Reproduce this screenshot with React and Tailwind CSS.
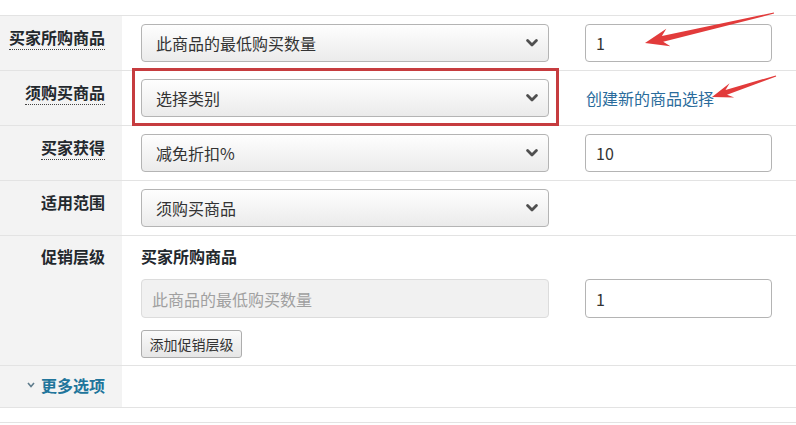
import React from "react";

function Chevron({ className = "" }) {
  return (
    <svg width="12" height="8" viewBox="0 0 12 8" className={className}>
      <path d="M1.6 1.6 L6 6 L10.4 1.6" fill="none" stroke="#505050" strokeWidth="2.8" strokeLinecap="round" strokeLinejoin="round" />
    </svg>
  );
}

function Select({ text }) {
  return (
    <div className="w-[408px] h-[38px] flex items-center justify-between pl-[14px] pr-[10px] border border-[#b4b4b4] rounded-[4px] bg-gradient-to-b from-[#fefefe] to-[#ebebeb] text-[16px] text-[#333]">
      <span>{text}</span>
      <Chevron />
    </div>
  );
}

function NumInput({ value }) {
  return (
    <div className="w-[187px] h-[38px] flex items-center pl-[10px] border border-[#b4b4b4] rounded-[4px] bg-white text-[16px] text-[#333]">
      {value}
    </div>
  );
}

function Label({ children, dotted }) {
  return (
    <div className="w-[122px] shrink-0 bg-[#f3f3f3] pr-[17px] pt-[9px] text-right text-[16px] leading-[24px] font-bold text-[#23282d]">
      <span className={dotted ? "border-b border-dotted border-[#444]" : ""}>{children}</span>
    </div>
  );
}

function Row({ label, dotted, children }) {
  return (
    <div className="flex border-b border-[#e3e3e3]">
      <Label dotted={dotted}>{label}</Label>
      <div className="flex items-center py-[8px] pl-[19px]">{children}</div>
    </div>
  );
}

function arrowPoints(tail, tip, headLen, headW, shaftW) {
  const dx = tail[0] - tip[0];
  const dy = tail[1] - tip[1];
  const L = Math.hypot(dx, dy);
  const d = [dx / L, dy / L];
  const n = [-d[1], d[0]];
  const p = (t, s) => [tip[0] + t * d[0] + s * n[0], tip[1] + t * d[1] + s * n[1]];
  const pts = [
    p(0, 0),
    p(headLen, headW / 2),
    p(headLen - 6, shaftW / 2),
    p(L, 0.6),
    p(L, -0.6),
    p(headLen - 6, -shaftW / 2),
    p(headLen, -headW / 2),
  ];
  return pts.map((q) => q[0].toFixed(1) + "," + q[1].toFixed(1)).join(" ");
}

export default function App() {
  return (
    <div
      className="relative w-[796px] h-[425px] bg-white overflow-hidden"
      style={{ fontFamily: "'Noto Sans CJK SC', 'Noto Sans', sans-serif" }}
    >
      <div className="h-[15px]" />
      <div className="border-t border-[#e3e3e3]">
        <Row label="买家所购商品" dotted>
          <Select text="此商品的最低购买数量" />
          <div className="ml-[36px]">
            <NumInput value="1" />
          </div>
        </Row>
        <Row label="须购买商品" dotted>
          <Select text="选择类别" />
          <a className="ml-[37px] text-[16px] text-[#2a6c9c]">创建新的商品选择</a>
        </Row>
        <Row label="买家获得" dotted>
          <Select text="减免折扣%" />
          <div className="ml-[36px]">
            <NumInput value="10" />
          </div>
        </Row>
        <Row label="适用范围">
          <Select text="须购买商品" />
        </Row>
        <div className="flex border-b border-[#e3e3e3]">
          <div className="w-[122px] shrink-0 bg-[#f3f3f3] pr-[17px] pt-[8px] text-right text-[16px] leading-[24px] font-bold text-[#23282d]">
            促销层级
          </div>
          <div className="flex flex-col pl-[19px] pt-[8px] pb-[7px]">
            <div className="text-[16px] leading-[24px] font-bold text-[#23282d]">买家所购商品</div>
            <div className="flex mt-[11px]">
              <div className="w-[408px] h-[39px] flex items-center pl-[10px] border border-[#dcdcdc] rounded-[4px] bg-[#f1f1f1] text-[16px] text-[#a0a0a0]">
                此商品的最低购买数量
              </div>
              <div className="ml-[36px] w-[187px] h-[39px] flex items-center pl-[10px] border border-[#b4b4b4] rounded-[4px] bg-white text-[16px] text-[#333]">
                1
              </div>
            </div>
            <div className="mt-[12px] w-[101px] h-[28px] flex items-center justify-center border border-[#adadad] rounded-[3px] bg-gradient-to-b from-[#fafafa] to-[#e6e6e6] text-[14px] text-[#333]">
              添加促销层级
            </div>
          </div>
        </div>
        <div className="flex border-b border-[#e3e3e3] h-[42px]">
          <div className="w-[122px] shrink-0 bg-[#f3f3f3] pr-[17px] pb-[3px] flex items-center justify-end gap-[6px] text-[16px] font-bold text-[#21759b]">
            <svg width="8" height="6" viewBox="0 0 8 6">
              <path d="M1 1 L4 4.5 L7 1" fill="none" stroke="#5f7c8c" strokeWidth="1.6" />
            </svg>
            <span>更多选项</span>
          </div>
        </div>
        <div className="h-[15px] border-b border-[#e3e3e3]" />
      </div>

      <div className="absolute left-[132px] top-[68px] w-[427px] h-[58px] border-[3px] border-[#c63c3f] pointer-events-none" />

      <svg className="absolute inset-0 pointer-events-none" width="796" height="425">
        <polygon points={arrowPoints([774, 13], [645, 43], 24, 18, 6)} fill="#e23b3b" />
        <polygon points={arrowPoints([776, 76], [712, 97], 21, 15, 5)} fill="#e23b3b" />
      </svg>
    </div>
  );
}
